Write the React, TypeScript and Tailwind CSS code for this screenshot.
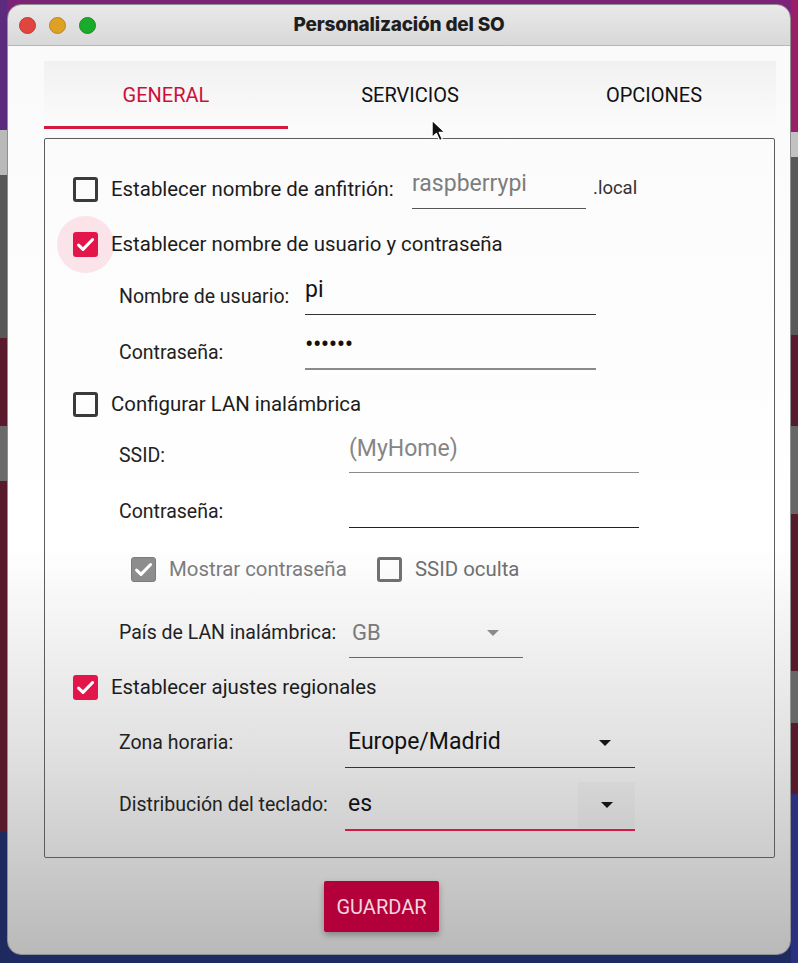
import React from "react"

const CheckIcon = () => (
  <svg viewBox="0 0 24 24" className="w-[23px] h-[23px]" fill="none" stroke="white" strokeWidth={3.2} strokeLinecap="round" strokeLinejoin="round">
    <path d="M4.8 12.6l4.6 4.5L19.4 6.8" />
  </svg>
)

const Checkbox = ({ checked = false, disabled = false }: { checked?: boolean; disabled?: boolean }) => {
  if (checked) {
    return (
      <div
        className={`relative w-[25px] h-[25px] rounded-[3px] flex items-center justify-center shrink-0 ${
          disabled ? "bg-[#8d8d8d] border border-[#7b7b7b]" : "bg-[#e3164b]"
        }`}
      >
        <CheckIcon />
      </div>
    )
  }
  return (
    <div
      className={`w-[25px] h-[25px] rounded-[3px] border-[3px] shrink-0 ${
        disabled ? "border-[#707070]" : "border-[#3a3a3a]"
      }`}
    />
  )
}

const Arrow = ({ color }: { color: string }) => (
  <div
    className={`w-0 h-0 border-l-[6px] border-r-[6px] border-t-[6px] border-l-transparent border-r-transparent ${color}`}
  />
)

const Label = ({ w, children }: { w: string; children: React.ReactNode }) => (
  <span className={`${w} shrink-0 text-[19.5px] text-[#222]`}>{children}</span>
)

const Cursor = () => (
  <svg viewBox="0 0 14 22" className="absolute left-[431px] top-[119px] w-[15px] h-[24px]">
    <path d="M1 1 L1 17 L5 13.2 L8 20 L10.6 18.8 L7.7 12.3 L13 12.3 Z" fill="#111" stroke="white" strokeWidth={1.2} strokeLinejoin="round" />
  </svg>
)

export default function App() {
  return (
    <div className="relative flex w-[798px] h-[963px] overflow-hidden font-['Roboto',sans-serif]">
      <div className="w-[7px] shrink-0 bg-[linear-gradient(to_bottom,#5d2b7d_0%,#5d2b7d_13.5%,#b9b9b9_13.5%,#b9b9b9_18.2%,#575757_18.2%,#575757_35.1%,#5a1a2d_35.1%,#5a1a2d_44.2%,#6a6a6a_44.2%,#6a6a6a_49.9%,#561a2b_49.9%,#561a2b_86.4%,#1e2a5e_86.4%,#1e2a5e_100%)]" />

      <div className="flex-1 pt-[4px] pb-[8px] bg-[linear-gradient(to_bottom,#7c2378_0%,#7c2378_50%,#1f2a62_50%,#1f2a62_100%)]">
        <div className="h-full flex flex-col rounded-[14px] overflow-hidden border border-[#8f8f8f]">
          {/* title bar */}
          <div className="h-[41px] shrink-0 grid grid-cols-[1fr_auto_1fr] items-center bg-[linear-gradient(to_bottom,#e9e9e9,#d8d8d8)] border-b border-[#b8b8b8]">
            <div className="flex items-center gap-[13px] pl-[11px]">
              <div className="w-[17px] h-[17px] rounded-full bg-[#e1453f] border border-[#c03a33]" />
              <div className="w-[17px] h-[17px] rounded-full bg-[#dfa123] border border-[#bf861a]" />
              <div className="w-[17px] h-[17px] rounded-full bg-[#1bab2a] border border-[#16901f]" />
            </div>
            <div className="font-['Inter',sans-serif] font-extrabold text-[19px] text-[#1e1e1e] tracking-[-0.2px]">
              Personalización del SO
            </div>
            <div />
          </div>

          {/* body */}
          <div className="flex-1 flex flex-col pl-[36px] pr-[14px] pt-[15px] bg-[linear-gradient(to_bottom,#fafafa_0%,#ffffff_55%,#e0e0e0_78%,#b9b9b9_100%)]">
            {/* tabs */}
            <div className="h-[68px] shrink-0 grid grid-cols-3 bg-[linear-gradient(to_bottom,#f1f1f1,#fbfbfb)]">
              <div className="flex items-center justify-center border-b-[3px] border-[#d7173f] pt-[3px] text-[20px] text-[#cc0f3a]">
                GENERAL
              </div>
              <div className="flex items-center justify-center text-[20px] text-[#111]">SERVICIOS</div>
              <div className="flex items-center justify-center text-[20px] text-[#111]">OPCIONES</div>
            </div>

            {/* panel */}
            <div className="mt-[9px] mr-[1px] h-[720px] shrink-0 border border-[#5c5c5c] rounded-[2px] flex flex-col pt-[25px]">
              {/* hostname */}
              <div className="h-[50px] flex items-center pl-[28px]">
                <Checkbox />
                <span className="ml-[13px] w-[301px] text-[20.4px] text-[#1c1c1c]">Establecer nombre de anfitrión:</span>
                <div className="w-[174px] h-[40px] border-b-[1.5px] border-[#555] flex items-center pb-[8px] text-[23px] text-[#7d7d7d]">
                  raspberrypi
                </div>
                <span className="ml-[7px] text-[18.5px] text-[#333]">.local</span>
              </div>

              {/* user */}
              <div className="h-[60px] flex items-center pl-[28px]">
                <div className="relative w-[25px] h-[25px]">
                  <div className="absolute -inset-[16px] rounded-full bg-[#fbe3ea]" />
                  <Checkbox checked />
                </div>
                <span className="relative ml-[13px] text-[20.4px] text-[#1c1c1c]">Establecer nombre de usuario y contraseña</span>
              </div>

              <div className="h-[46px] flex items-center pl-[74px]">
                <Label w="w-[186px]">Nombre de usuario:</Label>
                <div className="w-[291px] h-[36px] border-b-[1.5px] border-[#333] flex items-center pb-[12px] text-[23px] text-[#111]">
                  pi
                </div>
              </div>

              <div className="h-[66px] flex items-center pl-[74px]">
                <Label w="w-[186px]">Contraseña:</Label>
                <div className="w-[291px] h-[34px] border-b-2 border-[#8a8a8a] flex items-center pb-[14px] text-[25px] text-[#111] tracking-[-0.5px]">
                  ••••••
                </div>
              </div>

              {/* wifi */}
              <div className="h-[36px] flex items-center pl-[28px]">
                <Checkbox />
                <span className="ml-[13px] text-[20.4px] text-[#1c1c1c]">Configurar LAN inalámbrica</span>
              </div>

              <div className="h-[68px] flex items-center pl-[74px]">
                <Label w="w-[230px]">SSID:</Label>
                <div className="w-[290px] h-[34px] border-b-[1.5px] border-[#8a8a8a] flex items-center pb-[12px] text-[23px] text-[#858585]">
                  (MyHome)
                </div>
              </div>

              <div className="h-[44px] flex items-center pl-[74px]">
                <Label w="w-[230px]">Contraseña:</Label>
                <div className="w-[290px] h-[32px] border-b-[1.5px] border-[#222]" />
              </div>

              <div className="h-[70px] flex items-center pl-[86px]">
                <Checkbox checked disabled />
                <span className="ml-[13px] w-[208px] text-[20.4px] text-[#7b7b7b]">Mostrar contraseña</span>
                <Checkbox disabled />
                <span className="ml-[13px] text-[20.4px] text-[#6f6f6f]">SSID oculta</span>
              </div>

              <div className="h-[58px] flex items-center pl-[74px]">
                <Label w="w-[230px]">País de LAN inalámbrica:</Label>
                <div className="w-[174px] h-[50px] border-b-[1.5px] border-[#666] flex items-center justify-between pl-[3px] pr-[24px] text-[22px] text-[#7a7a7a]">
                  GB
                  <Arrow color="border-t-[#8a8a8a]" />
                </div>
              </div>

              {/* locale */}
              <div className="h-[50px] flex items-center pl-[28px]">
                <Checkbox checked />
                <span className="ml-[13px] text-[20.4px] text-[#1c1c1c]">Establecer ajustes regionales</span>
              </div>

              <div className="h-[62px] flex items-center pl-[74px]">
                <Label w="w-[226px]">Zona horaria:</Label>
                <div className="w-[290px] h-[50px] border-b-[1.5px] border-[#333] flex items-center justify-between pl-[3px] pr-[24px] text-[23px] text-[#111]">
                  Europe/Madrid
                  <Arrow color="border-t-[#151515]" />
                </div>
              </div>

              <div className="h-[62px] flex items-center pl-[74px]">
                <Label w="w-[226px]">Distribución del teclado:</Label>
                <div className="w-[290px] h-[52px] border-b-2 border-[#d21a46] flex items-center text-[23px] text-[#111]">
                  <span className="flex-1 pl-[3px]">es</span>
                  <div className="w-[57px] h-[46px] mt-[1px] bg-black/[0.02] flex items-center justify-center">
                    <Arrow color="border-t-[#151515]" />
                  </div>
                </div>
              </div>
            </div>

            {/* save */}
            <div className="pt-[23px] pl-[280px]">
              <button className="w-[115px] h-[51px] rounded-[2px] bg-[#b3003a] text-[20px] text-[#f1d7df] shadow-[0_3px_6px_rgba(0,0,0,0.3)]">
                GUARDAR
              </button>
            </div>
          </div>
        </div>
      </div>

      <div className="w-[7px] shrink-0 bg-[linear-gradient(to_bottom,#9c1e6b_0%,#9c1e6b_13.7%,#c2c2c2_13.7%,#c2c2c2_16.3%,#595959_16.3%,#595959_34.8%,#5a1a2d_34.8%,#5a1a2d_44.2%,#676767_44.2%,#676767_53.4%,#561a2b_53.4%,#561a2b_69.7%,#676767_69.7%,#676767_75.1%,#561a2b_75.1%,#561a2b_82.4%,#2a3082_82.4%,#2a3082_100%)]" />

      <Cursor />
    </div>
  )
}
